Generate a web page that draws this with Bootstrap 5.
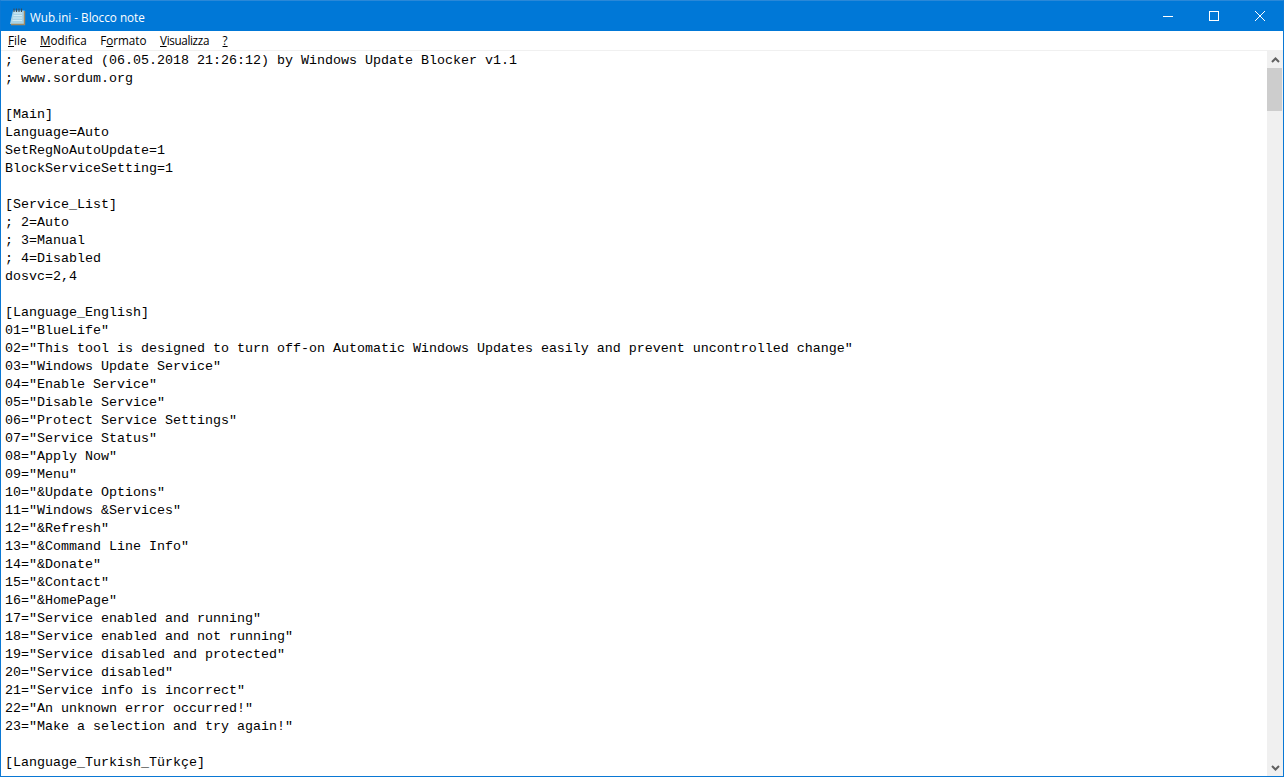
<!DOCTYPE html>
<html lang="it">
<head>
<meta charset="utf-8">
<title>Wub.ini - Blocco note</title>
<link href="https://cdn.jsdelivr.net/npm/bootstrap@5.3.0/dist/css/bootstrap.min.css" rel="stylesheet">
<style>
html,body{height:100%;margin:0;overflow:hidden;background:#fff}
.win-frame{height:777px;border:1px solid #0a78d4;border-top-color:#2a88d8;background:#fff}
.title-bar{height:30px;background:#0078d7;color:#fff;font:11.7px/30px "Open Sans","Noto Sans",sans-serif}
.title-ico{margin-left:8px;margin-right:4px;margin-top:1px}
.title-txt{padding-top:1px}
.win-btn{width:46px;height:30px}
.menu-bar{height:19px;font:11.7px/19px "Open Sans","Noto Sans",sans-serif;color:#000;padding-left:7px;gap:13.5px}
.menu-bar u{text-underline-offset:1px}
.menu-tight{letter-spacing:-.35px}
.sep-line{height:1px;background:#f0f0f0}
.edit-area{min-height:0}
.edit-text{margin:0;padding:1px 0 0 4px;font:13.333px/18px "Liberation Mono",monospace;color:#000;overflow:hidden;flex:1 1 auto}
.scroll-rail{width:16px;background:#f0f0f0}
.scroll-arrow{height:17px}
.scroll-thumb{height:43px;background:#cdcdcd;margin-right:1px}
</style>
</head>
<body>
<div class="win-frame d-flex flex-column">
  <div class="title-bar d-flex align-items-center flex-shrink-0">
    <svg class="title-ico" width="17" height="18" viewBox="0 0 17 18"><path d="M4 2.500h11.500V16H1z" fill="#a9d3e6"/><path d="M15.500 3v13.500H2" stroke="#a38a62" stroke-width="1.400" fill="none"/><path d="M5 5h8M4.500 7.500h8.500M4 10h9M3.500 12.500h9.500" stroke="#d3ecf5" stroke-width="1"/><path d="M5 .5v3.500M7.500 .5v3.500M10 .5v3.500M12.500 .5v3.500" stroke="#3c4a55" stroke-width="1.100"/></svg>
    <span class="flex-grow-1 title-txt">Wub.ini - Blocco note</span>
    <div class="win-btn d-flex align-items-center justify-content-center"><svg width="10" height="10" viewBox="0 0 10 10"><path d="M0 5.500h10" stroke="#fff" fill="none"/></svg></div>
    <div class="win-btn d-flex align-items-center justify-content-center"><svg width="10" height="10" viewBox="0 0 10 10"><rect x=".5" y=".5" width="9" height="9" stroke="#fff" fill="none"/></svg></div>
    <div class="win-btn d-flex align-items-center justify-content-center"><svg width="10" height="10" viewBox="0 0 10 10"><path d="M0 0l10 10M10 0L0 10" stroke="#fff" fill="none"/></svg></div>
  </div>
  <div class="menu-bar d-flex flex-shrink-0">
    <span><u>F</u>ile</span><span><u>M</u>odifica</span><span>F<u>o</u>rmato</span><span class="menu-tight"><u>V</u>isualizza</span><span><u>?</u></span>
  </div>
  <div class="sep-line flex-shrink-0"></div>
  <div class="edit-area d-flex flex-grow-1">
<pre class="edit-text">; Generated (06.05.2018 21:26:12) by Windows Update Blocker v1.1
; www.sordum.org

[Main]
Language=Auto
SetRegNoAutoUpdate=1
BlockServiceSetting=1

[Service_List]
; 2=Auto
; 3=Manual
; 4=Disabled
dosvc=2,4

[Language_English]
01="BlueLife"
02="This tool is designed to turn off-on Automatic Windows Updates easily and prevent uncontrolled change"
03="Windows Update Service"
04="Enable Service"
05="Disable Service"
06="Protect Service Settings"
07="Service Status"
08="Apply Now"
09="Menu"
10="&amp;Update Options"
11="Windows &amp;Services"
12="&amp;Refresh"
13="&amp;Command Line Info"
14="&amp;Donate"
15="&amp;Contact"
16="&amp;HomePage"
17="Service enabled and running"
18="Service enabled and not running"
19="Service disabled and protected"
20="Service disabled"
21="Service info is incorrect"
22="An unknown error occurred!"
23="Make a selection and try again!"

[Language_Turkish_Türkçe]</pre>
    <div class="scroll-rail d-flex flex-column flex-shrink-0">
      <div class="scroll-arrow d-flex align-items-center justify-content-center"><svg width="9" height="6" viewBox="0 0 9 6"><path d="M1 5l3.500-3.500L8 5" stroke="#606060" stroke-width="2" fill="none"/></svg></div>
      <div class="scroll-thumb"></div>
      <div class="flex-grow-1"></div>
      <div class="scroll-arrow d-flex align-items-center justify-content-center"><svg width="9" height="6" viewBox="0 0 9 6"><path d="M1 1l3.500 3.500L8 1" stroke="#606060" stroke-width="2" fill="none"/></svg></div>
    </div>
  </div>
</div>
</body>
</html>
